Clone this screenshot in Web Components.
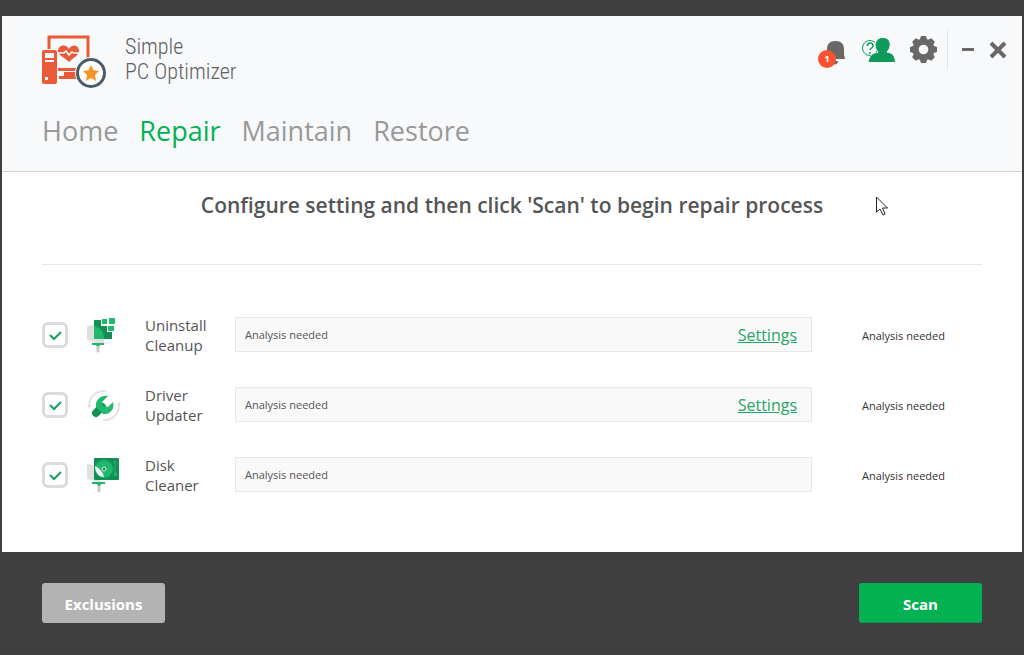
<!DOCTYPE html>
<html lang="en">
<head>
<meta charset="utf-8">
<title>Simple PC Optimizer</title>
<style>
    :root {
        --dark: #404040;
        --green: #04b152;
        --link: #1fa866;
        --gray: #999999;
        --text: #555555;
        --pale: #f7f9fb;
    }

    body {
        margin: 0;
        background-color: var(--dark);
        font-family: "Open Sans", "Noto Sans", sans-serif;
        color: var(--text);
    }
</style>
</head>
<body>
<optimizer-app></optimizer-app>

<script>
/**
 * Helper for turning a string of markup into a template
 */
function makeTemplate(html) {
    const template = document.createElement("template");
    template.innerHTML = html;
    return template;
}

// logo and product name
const brandTemplate = makeTemplate(`
    <style>
        :host {
            display: flex;
            gap: 17px;
            align-items: flex-start;
        }

        svg {
            display: block;
        }

        div {
            padding-top: 2px;
            font-family: "Roboto Condensed", "Liberation Sans Narrow", Roboto, sans-serif;
            font-weight: 300;
            font-size: 22px;
            line-height: 25px;
            color: #606060;
        }
    </style>

    <svg width="66" height="58" viewBox="1 -3 66 58" aria-hidden="true">
        <path d="M8 14V2H47V23" fill="none" stroke="#ea5a38" stroke-width="3"/>
        <rect x="1" y="15" width="15" height="34" rx="2" fill="#ea5a38"/>
        <path d="M4 18H13V23H4ZM4 25H13V27H4ZM4 42H7V45H4Z" fill="#f7f9fb"/>
        <path d="M28 14C25 8 17 10 17 16C17 20 23 22 28 27C33 22 38 20 38 16C38 10 31 8 28 14Z" fill="#ea5a38"/>
        <path d="M16 18H23L25 16L28 20L31 17L33 18H39" fill="none" stroke="#f7f9fb" stroke-width="1.500"/>
        <path d="M17 33H36V36H17ZM23 37H36V42H23ZM18 41H36V44H18Z" fill="#ea5a38"/>
        <circle cx="50" cy="38" r="16" fill="#f7f9fb"/>
        <circle cx="50" cy="38" r="13.500" fill="#fff" stroke="#4a5b67" stroke-width="3"/>
        <path d="M50 30L52.500 35.300L58 36L54 40L55 46L50 43L45 46L46 40L42 36L47.500 35.300Z" fill="#fb9226"/>
    </svg>
    <div>Simple<br>PC Optimizer</div>
`);

class BrandMark extends HTMLElement {
    constructor() {
        super();
        this.attachShadow({ mode: "open" }).append(brandTemplate.content.cloneNode(true));
    }
}

// notification, account, settings and window buttons
const toolsTemplate = makeTemplate(`
    <style>
        :host {
            display: flex;
            gap: 14px;
        }

        button {
            display: block;
            padding: 0;
            border: 0;
            background: none;
            color: #686868;
            cursor: pointer;
        }

        svg {
            display: block;
            height: 40px;
        }

        .bell {
            position: relative;
            margin-right: 2px;
        }

        .badge {
            position: absolute;
            left: 0;
            top: 20px;
            width: 18px;
            border-radius: 9px;
            background-color: #f9522e;
            color: #ffffff;
            font: bold 9px/18px "Open Sans", sans-serif;
            text-align: center;
        }

        .window {
            display: flex;
            gap: 15px;
            padding-left: 14px;
            margin-left: -5px;
            border-left: 1px solid #e2e4e6;
        }
    </style>

    <button class="bell" aria-label="Notifications">
        <svg width="28" viewBox="0 0 28 40">
            <path d="M9 28V19C9 14 12 11 17 11H18C23 11 26 14 26 19V24C26 26 27 27 27 29H9ZM14 31H20C20 34 18 35 14 34Z" fill="currentColor"/>
        </svg>
        <span class="badge">1</span>
    </button>
    <button aria-label="Account and help">
        <svg width="34" viewBox="0 0 34 40">
            <circle cx="8" cy="18" r="7.500" fill="none" stroke="#0e9a5b"/>
            <path d="M5.500 16C5.500 12 11 12 11 16C11 18 8 18 8 20M8 22V24" fill="none" stroke="#0e9a5b" stroke-width="1.500"/>
            <path d="M6 32.500C7 26 10 23 16 22C10 16 14 7 21 7.500C28 7 31 16 25 22C31 23 33 26 33.500 32.500Z" fill="#0e9a5b" stroke="#f7f9fb"/>
        </svg>
    </button>
    <button aria-label="Preferences">
        <svg width="28" viewBox="0 0 28 40">
            <g transform="translate(13.500 19.500)">
                <circle r="7.800" fill="none" stroke="currentColor" stroke-width="6"/>
                <g fill="currentColor">
                    <path id="tooth" d="M-4 -9L-2.500 -13.500H2.500L4 -9ZM-4 9L-2.500 13.500H2.500L4 9Z"/>
                    <use href="#tooth" transform="rotate(45)"/>
                    <use href="#tooth" transform="rotate(90)"/>
                    <use href="#tooth" transform="rotate(135)"/>
                </g>
            </g>
        </svg>
    </button>
    <div class="window">
        <button aria-label="Minimize">
            <svg width="12" viewBox="0 0 12 40"><path d="M0 18H12V21H0Z" fill="currentColor"/></svg>
        </button>
        <button aria-label="Close">
            <svg width="18" viewBox="0 0 18 40"><path d="M2 13L16 27M16 13L2 27" stroke="currentColor" stroke-width="4"/></svg>
        </button>
    </div>
`);

class WindowTools extends HTMLElement {
    constructor() {
        super();
        this.attachShadow({ mode: "open" }).append(toolsTemplate.content.cloneNode(true));
    }
}

// main navigation
const navTemplate = makeTemplate(`
    <style>
        :host {
            display: block;
        }

        nav {
            display: flex;
            gap: 21px;
        }

        a {
            font-size: 27px;
            line-height: 40px;
            color: var(--gray);
            text-decoration: none;
        }

        a[aria-current] {
            color: var(--green);
        }
    </style>

    <nav>
        <a href="#home">Home</a>
        <a href="#repair" aria-current="page">Repair</a>
        <a href="#maintain">Maintain</a>
        <a href="#restore">Restore</a>
    </nav>
`);

class MainNav extends HTMLElement {
    constructor() {
        super();
        this.attachShadow({ mode: "open" }).append(navTemplate.content.cloneNode(true));
    }
}

// one repair task: checkbox, icon, name, progress bar and status
const taskTemplate = makeTemplate(`
    <style>
        :host {
            display: grid;
            grid-template-columns: 45px 58px 90px 1fr 120px;
            align-items: center;
            height: 40px;
        }

        .check {
            display: grid;
            width: 26px;
        }

        .check > * {
            grid-area: 1 / 1;
        }

        input {
            appearance: none;
            box-sizing: border-box;
            width: 26px;
            height: 26px;
            margin: 0;
            border: 3px solid #dcdcdc;
            border-radius: 6px;
            background-color: #ffffff;
        }

        .check svg {
            pointer-events: none;
        }

        input:not(:checked) + svg {
            visibility: hidden;
        }

        label {
            max-width: 70px;
            font-size: 15px;
            line-height: 20px;
        }

        .bar {
            display: flex;
            justify-content: space-between;
            align-items: center;
            align-self: start;
            box-sizing: border-box;
            height: 35px;
            padding: 0 14px 0 9px;
            margin: 2px 50px 0 0;
            border: 1px solid #e8e8e8;
            background-color: #f9f9f9;
            font-size: 11px;
        }

        a {
            font-size: 16px;
            color: var(--link);
        }

        .status {
            font-size: 11px;
            font-weight: 500;
            color: #333333;
        }
    </style>

    <div class="check">
        <input type="checkbox" id="task" checked>
        <svg width="26" height="26" viewBox="0 0 26 26">
            <path d="M8 13L12 17L19 10" fill="none" stroke="#16a15e" stroke-width="2"/>
        </svg>
    </div>
    <slot name="icon"></slot>
    <label for="task"><slot></slot></label>
    <div class="bar">
        <span>Analysis needed</span>
        <a href="#settings">Settings</a>
    </div>
    <span class="status">Analysis needed</span>
`);

class RepairTask extends HTMLElement {
    constructor() {
        super();
        const shadow = this.attachShadow({ mode: "open" });
        shadow.append(taskTemplate.content.cloneNode(true));
        if (!this.hasAttribute("settings")) {
            shadow.querySelector("a").remove();
        }
    }
}

// button in the bottom bar
const actionTemplate = makeTemplate(`
    <style>
        :host {
            display: block;
        }

        button {
            width: 123px;
            height: 40px;
            padding: 2px 0 0;
            border: 0;
            border-radius: 3px;
            background-color: #b3b3b3;
            color: #ffffff;
            font: bold 15px "Open Sans", sans-serif;
            cursor: pointer;
        }

        :host([primary]) button {
            background-color: var(--green);
            box-shadow: inset 0 -1px #0d9548;
        }
    </style>

    <button><slot></slot></button>
`);

class ActionButton extends HTMLElement {
    constructor() {
        super();
        this.attachShadow({ mode: "open" }).append(actionTemplate.content.cloneNode(true));
    }
}

// whole window
const appTemplate = makeTemplate(`
    <style>
        :host {
            display: block;
            padding: 16px 2px 0;
        }

        header {
            padding: 14px 15px 20px 40px;
            border-bottom: 1px solid #d4d5d6;
            background-color: var(--pale);
        }

        .top {
            display: flex;
            justify-content: space-between;
            align-items: flex-start;
            height: 61px;
        }

        brand-mark {
            margin-top: 2px;
        }

        main-nav {
            margin-top: 20px;
        }

        main {
            padding: 18px 40px 57px;
            background-color: #ffffff;
        }

        h1 {
            margin: 0;
            padding-bottom: 44px;
            border-bottom: 1px solid #e8e8e8;
            font-size: 21px;
            font-weight: 600;
            line-height: 30px;
            text-align: center;
        }

        .tasks {
            display: grid;
            gap: 30px;
            padding-top: 50px;
        }

        footer {
            display: flex;
            justify-content: space-between;
            padding: 31px 40px 32px;
        }

        .pointer {
            position: absolute;
            left: 876px;
            top: 196px;
        }
    </style>

    <header>
        <div class="top">
            <brand-mark></brand-mark>
            <window-tools></window-tools>
        </div>
        <main-nav></main-nav>
    </header>
    <main>
        <h1>Configure setting and then click 'Scan' to begin repair process</h1>
        <div class="tasks">
            <repair-task settings>
                <svg slot="icon" width="34" height="36" viewBox="0 0 34 36">
                    <path d="M0 9L7 8V22L10 25L0 23Z" fill="#dedede"/>
                    <path d="M7 3H14V9H20V15H25V22H7Z" fill="#128f57"/>
                    <path d="M7 9C13 10 17 15 17 22H7Z" fill="#21b76c"/>
                    <path d="M15 2H20V7H15ZM22 1H28V7H22ZM21 9H27V14H21Z" fill="#1fba6d"/>
                    <path d="M7 22H17V26H7Z" fill="#e2e2e2"/>
                    <path d="M5 26H17V28H13L12 30H10L9 28H5Z" fill="#21b76c"/>
                    <path d="M11 30V34" stroke="#c9c9c9" stroke-width="3" stroke-linecap="round"/>
                </svg>
                Uninstall Cleanup
            </repair-task>
            <repair-task settings>
                <svg slot="icon" width="34" height="36" viewBox="0 0 34 36">
                    <path d="M2 19C2 10 9 3 19 4M32 18C32 27 25 34 16 33" fill="none" stroke="#e3e3e3" stroke-width="2"/>
                    <path d="M0 18L2 21L5 18ZM29 18L32 15L34 18Z" fill="#dedede"/>
                    <path d="M15 20L9 26" stroke="#128f57" stroke-width="8" stroke-linecap="round"/>
                    <path d="M21 9C14 8 8 13 9 20L16 27C23 28 28 22 26 15L21 20L16 19L15 15Z" fill="#21b96d"/>
                </svg>
                Driver Updater
            </repair-task>
            <repair-task>
                <svg slot="icon" width="34" height="36" viewBox="0 0 34 36">
                    <path d="M0 7L8 8V21L14 25L0 22Z" fill="#e0e0e0"/>
                    <rect x="7" y="1" width="25" height="22" rx="1" fill="#128f57"/>
                    <circle cx="17" cy="12" r="9" fill="#21b76c"/>
                    <path d="M8 9C12 11 16 15 17 20C13 20 8 17 8 9Z" fill="#f4f7f5"/>
                    <circle cx="17" cy="12" r="2" fill="#128f57" stroke="#d7eee2"/>
                    <path d="M28 5V18" stroke="#21b76c"/>
                    <path d="M27 16H30V19H27ZM27 4H29V6H27Z" fill="#21b76c"/>
                    <path d="M7 23L14 24L17 26H7Z" fill="#e2e2e2"/>
                    <path d="M5 25H18V27H14L13 29H11L10 27H5Z" fill="#21b76c"/>
                    <path d="M12 30V34" stroke="#c9c9c9" stroke-width="3" stroke-linecap="round"/>
                </svg>
                Disk Cleaner
            </repair-task>
        </div>
    </main>
    <footer>
        <action-button>Exclusions</action-button>
        <action-button primary>Scan</action-button>
    </footer>
    <svg class="pointer" width="12" height="20" viewBox="0 0 12 20" aria-hidden="true">
        <path d="M0.500 1V16L4 13L7 19L9 18L6.500 12H11.500Z" fill="#fff" stroke="#222"/>
    </svg>
`);

class OptimizerApp extends HTMLElement {
    constructor() {
        super();
        this.attachShadow({ mode: "open" }).append(appTemplate.content.cloneNode(true));
    }
}

// define custom elements in the HTML
customElements.define("brand-mark", BrandMark);
customElements.define("window-tools", WindowTools);
customElements.define("main-nav", MainNav);
customElements.define("repair-task", RepairTask);
customElements.define("action-button", ActionButton);
customElements.define("optimizer-app", OptimizerApp);
</script>
</body>
</html>
